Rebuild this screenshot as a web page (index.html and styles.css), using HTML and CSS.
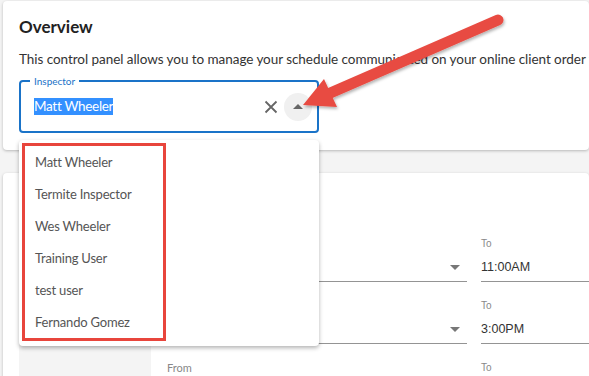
FILE: index.html
```html
<!DOCTYPE html>
<html lang="en">
    <head>
        <meta charset="UTF-8" />
        <meta name="viewport" content="width=device-width, initial-scale=1.0" />
        <title>Schedule Settings</title>
        <link rel="stylesheet" href="styles.css">
    </head>
    <body>
        <div class="card overview">
            <h1>Overview</h1>
            <p class="intro">This control panel allows you to manage your schedule communicated on your online client order form.</p>

            <div class="field">
                <span class="field-label">Inspector</span>
                <span class="field-value"><span class="selected">Matt Wheeler</span></span>
                <button class="icon-btn clear" aria-label="Clear">
                    <svg width="14" height="14" viewBox="0 0 14 14"><path d="M1.5 1.5 L12.5 12.5 M12.5 1.5 L1.5 12.5" stroke="#666" stroke-width="1.8" fill="none"/></svg>
                </button>
                <button class="icon-btn toggle" aria-label="Close">
                    <svg width="10" height="5" viewBox="0 0 10 5"><path d="M0 5 L5 0 L10 5 Z" fill="#666"/></svg>
                </button>
            </div>
        </div>

        <div class="card hours">
            <div class="sidebar"></div>
            <div class="rows">
                <div class="row">
                    <div class="select">
                        <span class="small-label">From</span>
                        <div class="select-value"><span></span><i class="caret"></i></div>
                    </div>
                    <div class="select">
                        <span class="small-label">To</span>
                        <div class="select-value"><span>11:00AM</span></div>
                    </div>
                </div>
                <div class="row">
                    <div class="select">
                        <span class="small-label">From</span>
                        <div class="select-value"><span></span><i class="caret"></i></div>
                    </div>
                    <div class="select">
                        <span class="small-label">To</span>
                        <div class="select-value"><span>3:00PM</span></div>
                    </div>
                </div>
                <div class="row">
                    <div class="select">
                        <span class="small-label from">From</span>
                        <div class="select-value"><span></span><i class="caret"></i></div>
                    </div>
                    <div class="select">
                        <span class="small-label">To</span>
                        <div class="select-value"><span>5:00PM</span></div>
                    </div>
                </div>
            </div>
        </div>

        <!-- open inspector menu -->
        <div class="menu">
            <ul class="options">
                <li>Matt Wheeler</li>
                <li>Termite Inspector</li>
                <li>Wes Wheeler</li>
                <li>Training User</li>
                <li>test user</li>
                <li>Fernando Gomez</li>
            </ul>
        </div>

        <!-- annotation arrow -->
        <svg class="arrow" width="589" height="376" viewBox="0 0 589 376">
            <defs>
                <filter id="shadow" x="-20%" y="-20%" width="140%" height="140%">
                    <feDropShadow dx="1" dy="2" stdDeviation="1.5" flood-color="#000" flood-opacity="0.3"/>
                </filter>
            </defs>
            <g filter="url(#shadow)" fill="#e84b42">
                <path d="M498 20 L328 94" stroke="#e84b42" stroke-width="11" stroke-linecap="round"/>
                <path d="M303 105 L324 79 L337 107 Z"/>
            </g>
        </svg>
    </body>
</html>
```

FILE: styles.css
```css
body {
    margin: 0;
    background-color: #f4f4f4;
    font-family: Lato, "Noto Sans", sans-serif;
    color: #333;
    height: 376px;
    overflow: hidden;
    position: relative;
}

.card {
    background-color: white;
    border-radius: 4px;
    box-shadow: 0 1px 3px rgba(0, 0, 0, 0.25);
    margin-left: 3px;
}

.overview {
    margin-top: 1px;
    padding: 14px 16px 17px;
    overflow: hidden;
}

h1 {
    margin: 0;
    font-size: 17px;
    line-height: 24px;
    font-weight: 700;
    color: #222;
}

.intro {
    margin: 10px 0 11px;
    font-size: 13.5px;
    letter-spacing: -0.05px;
    line-height: 20px;
    white-space: nowrap;
}

.field {
    position: relative;
    box-sizing: border-box;
    width: 300px;
    height: 53px;
    border: 2px solid #1a73c8;
    border-radius: 4px;
    display: flex;
    align-items: center;
    padding: 0 5px 0 13px;
}

.field-label {
    position: absolute;
    top: -8px;
    left: 9px;
    padding: 0 4px;
    background-color: white;
    color: #1a73c8;
    font-size: 10px;
    line-height: 14px;
}

.field-value {
    flex: 1;
    font-size: 13.5px;
    letter-spacing: -0.3px;
}

.selected {
    background-color: #3390ff;
    color: white;
    line-height: 17px;
    display: inline-block;
}

.icon-btn {
    border: none;
    padding: 0;
    background: none;
    display: flex;
    align-items: center;
    justify-content: center;
}

.clear {
    width: 24px;
    height: 28px;
    margin-right: 1px;
}

.toggle {
    width: 28px;
    height: 28px;
    border-radius: 50%;
    background-color: #f0f0f0;
}

.hours {
    margin-top: 23px;
    height: 260px;
    display: flex;
    padding-left: 16px;
    overflow: hidden;
}

.sidebar {
    width: 132px;
    flex-shrink: 0;
    background-color: #f4f4f4;
}

.rows {
    flex: 1;
    padding: 64px 0 0 16px;
}

.row {
    display: flex;
    gap: 14px;
    margin-bottom: 17px;
}

.select {
    width: 300px;
    flex-shrink: 0;
}

.small-label {
    display: block;
    font-family: "Liberation Sans", Arial, sans-serif;
    font-size: 10px;
    line-height: 14px;
    color: #888;
}

.small-label.from {
    font-family: Lato, "Noto Sans", sans-serif;
    font-size: 11px;
}

.select-value {
    display: flex;
    align-items: center;
    justify-content: space-between;
    height: 20px;
    padding: 6px 7px 4px 0;
    border-bottom: 1px solid #949494;
    font-family: "Liberation Sans", Arial, sans-serif;
    font-size: 12.5px;
    color: #333;
}

.caret {
    width: 0;
    height: 0;
    border-left: 5px solid transparent;
    border-right: 5px solid transparent;
    border-top: 5px solid #777;
}

.menu {
    position: absolute;
    left: 19px;
    top: 140px;
    width: 300px;
    box-sizing: border-box;
    padding: 3px 3px 5px;
    background-color: white;
    border-radius: 4px;
    box-shadow: 0 2px 4px rgba(0, 0, 0, 0.3);
}

.options {
    list-style: none;
    margin: 0;
    padding: 0 0 0 10px;
    width: 144px;
    box-sizing: border-box;
    border: 3px solid #e8453c;
}

.options li {
    height: 32px;
    line-height: 32px;
    font-size: 13px;
    letter-spacing: -0.2px;
    color: #555;
    white-space: nowrap;
}

.arrow {
    position: absolute;
    left: 0;
    top: 0;
    pointer-events: none;
}
```
